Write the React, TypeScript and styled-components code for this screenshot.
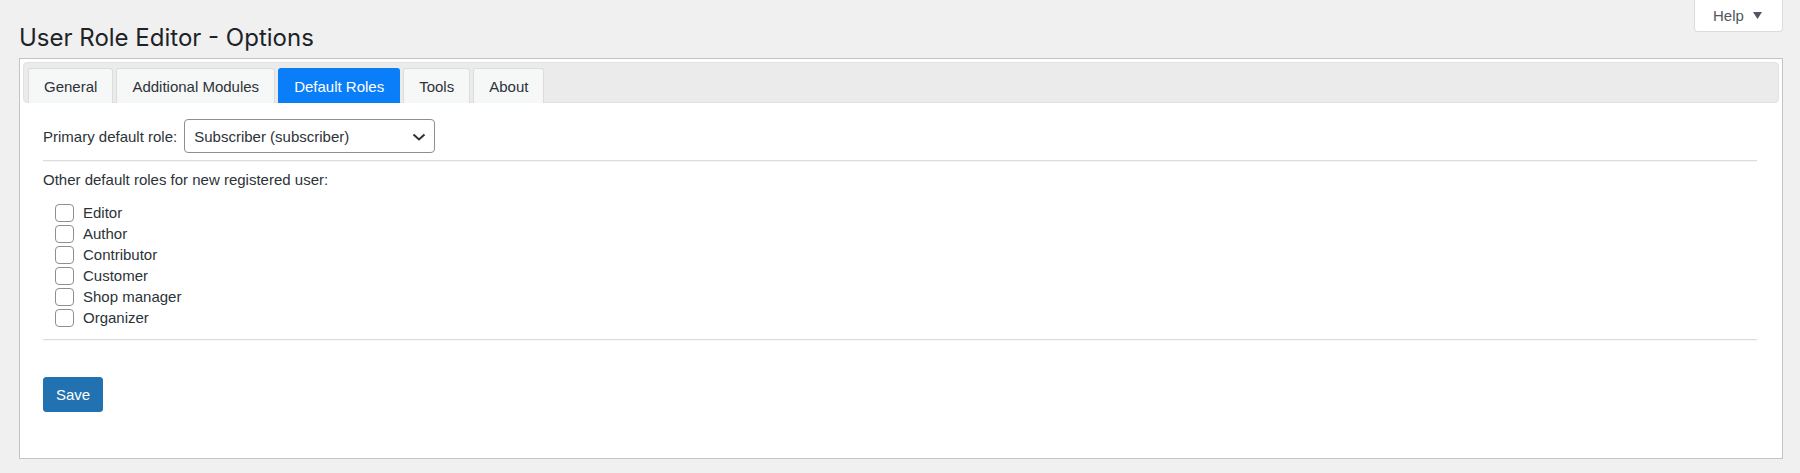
import React, { useState } from "react";
import styled, { createGlobalStyle } from "styled-components";

const textColor = "#2c3338";
const borderGray = "#c3c4c7";

const GlobalStyle = createGlobalStyle`
  html, body {
    margin: 0;
    padding: 0;
    background: #f0f0f1;
  }
  body {
    font-family: "Liberation Sans", Arial, sans-serif;
    color: ${textColor};
  }
`;

const tabs = ["General", "Additional Modules", "Default Roles", "Tools", "About"];
const roles = ["Editor", "Author", "Contributor", "Customer", "Shop manager", "Organizer"];

export default function App() {
  const [active, setActive] = useState("Default Roles");
  const [checked, setChecked] = useState<Record<string, boolean>>({});

  return (
    <Page>
      <GlobalStyle />
      <Header>
        <Title>User Role Editor - Options</Title>
        <HelpButton type="button">
          Help
          <svg width="9" height="7" viewBox="0 0 9 7">
            <path d="M0 0h9L4.5 7z" fill="#50575e" />
          </svg>
        </HelpButton>
      </Header>
      <Panel>
        <TabBar>
          {tabs.map((t) => (
            <Tab key={t} $active={t === active} onClick={() => setActive(t)}>
              {t}
            </Tab>
          ))}
        </TabBar>
        <Content>
          <SelectRow>
            <Label htmlFor="primary-role">Primary default role:</Label>
            <SelectBox>
              <Select id="primary-role" defaultValue="subscriber">
                <option value="subscriber">Subscriber (subscriber)</option>
                <option value="editor">Editor (editor)</option>
              </Select>
              <Chevron width="14" height="8" viewBox="0 0 14 8">
                <path d="M1.5 1.5 7 6.5l5.5-5" fill="none" stroke="#2c3338" strokeWidth="2" />
              </Chevron>
            </SelectBox>
          </SelectRow>
          <Divider />
          <SectionText>Other default roles for new registered user:</SectionText>
          <RoleList>
            {roles.map((r) => (
              <RoleRow key={r}>
                <Checkbox
                  type="checkbox"
                  checked={!!checked[r]}
                  onChange={() => setChecked({ ...checked, [r]: !checked[r] })}
                />
                {r}
              </RoleRow>
            ))}
          </RoleList>
          <Divider />
          <SaveButton type="button">Save</SaveButton>
        </Content>
      </Panel>
    </Page>
  );
}

const Page = styled.div`
  padding: 0 17px 16px 19px;
`;

const Header = styled.div`
  display: flex;
  justify-content: space-between;
  align-items: flex-start;
  height: 58px;
`;

const Title = styled.h1`
  margin: 0;
  padding: 23px 0 0 0;
  font-family: Inter, "Noto Sans", sans-serif;
  font-size: 24px;
  font-weight: 400;
  line-height: 30px;
  color: #1d2327;
`;

const HelpButton = styled.button`
  display: flex;
  align-items: center;
  gap: 9px;
  height: 32px;
  width: 89px;
  padding: 0 0 0 18px;
  background: #fff;
  border: 1px solid #dcdcde;
  border-top: none;
  border-radius: 0 0 4px 4px;
  font-family: "Liberation Sans", Arial, sans-serif;
  font-size: 15px;
  color: #50575e;
  cursor: pointer;
`;

const Panel = styled.div`
  background: #fff;
  border: 1px solid ${borderGray};
  padding: 3px 3px 46px 3px;
`;

const TabBar = styled.div`
  display: flex;
  align-items: flex-end;
  gap: 3px;
  height: 34px;
  padding: 5px 4px 0 4px;
  background: #ebebeb;
  border: 1px solid #e2e2e2;
  border-radius: 4px;
`;

const Tab = styled.button<{ $active: boolean }>`
  height: 35px;
  margin-bottom: -1px;
  padding: 0 15px;
  border: 1px solid ${(p) => (p.$active ? "#0a7ef8" : "#dcdcde")};
  border-bottom: none;
  border-radius: 3px 3px 0 0;
  background: ${(p) => (p.$active ? "#0a7ef8" : "#f6f7f7")};
  color: ${(p) => (p.$active ? "#fff" : textColor)};
  font-family: "Liberation Sans", Arial, sans-serif;
  font-size: 15px;
  cursor: pointer;
`;

const Content = styled.div`
  padding: 16px 22px 0 20px;
`;

const SelectRow = styled.div`
  display: flex;
  align-items: center;
  gap: 7px;
`;

const Label = styled.label`
  font-size: 15px;
  color: ${textColor};
`;

const SelectBox = styled.div`
  position: relative;
  width: 251px;
`;

const Select = styled.select`
  appearance: none;
  width: 100%;
  height: 34px;
  padding: 0 30px 0 9px;
  border: 1px solid #8c8f94;
  border-radius: 4px;
  background: #fff;
  font-family: "Liberation Sans", Arial, sans-serif;
  font-size: 15px;
  color: ${textColor};
`;

const Chevron = styled.svg`
  position: absolute;
  right: 9px;
  top: 14px;
  pointer-events: none;
`;

const Divider = styled.hr`
  margin: 7px 0 0 0;
  border: none;
  border-top: 1px solid #dcdcde;
  border-bottom: 1px solid #f6f7f7;
`;

const SectionText = styled.p`
  margin: 9px 0 0 0;
  font-size: 15px;
  line-height: 17px;
`;

const RoleList = styled.div`
  display: flex;
  flex-direction: column;
  padding: 14px 0 0 12px;
  margin-bottom: 11px;
`;

const RoleRow = styled.label`
  display: flex;
  align-items: center;
  gap: 9px;
  height: 21px;
  font-size: 15px;
  color: ${textColor};
`;

const Checkbox = styled.input`
  appearance: none;
  margin: 0;
  width: 19px;
  height: 18px;
  border: 1px solid #8c8f94;
  border-radius: 4px;
  background: #fff;
  &:checked {
    background: #2271b1;
    border-color: #2271b1;
  }
`;

const SaveButton = styled.button`
  display: block;
  margin-top: 36px;
  width: 60px;
  height: 35px;
  padding: 0;
  background: #2271b1;
  border: 1px solid #2271b1;
  border-radius: 3px;
  color: #fff;
  font-family: "Liberation Sans", Arial, sans-serif;
  font-size: 15px;
  cursor: pointer;
`;
